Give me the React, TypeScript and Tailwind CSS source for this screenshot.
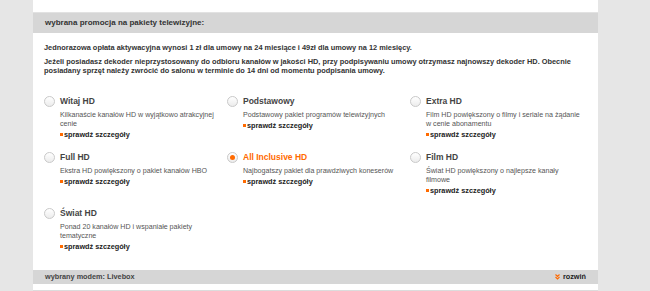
import React from "react";

interface Pkg {
  name: string;
  desc: string;
  selected?: boolean;
}

const packages: Pkg[] = [
  { name: "Witaj HD", desc: "Kilkanaście kanałów HD w wyjątkowo atrakcyjnej cenie" },
  { name: "Podstawowy", desc: "Podstawowy pakiet programów telewizyjnych" },
  { name: "Extra HD", desc: "Film HD powiększony o filmy i seriale na żądanie w cenie abonamentu" },
  { name: "Full HD", desc: "Ekstra HD powiększony o pakiet kanałów HBO" },
  { name: "All Inclusive HD", desc: "Najbogatszy pakiet dla prawdziwych koneserów", selected: true },
  { name: "Film HD", desc: "Świat HD powiększony o najlepsze kanały filmowe" },
  { name: "Świat HD", desc: "Ponad 20 kanałów HD i wspaniałe pakiety tematyczne" },
];

function Radio({ checked }: { checked?: boolean }) {
  return (
    <span className="mt-[1px] flex h-[11px] w-[11px] shrink-0 items-center justify-center rounded-full border border-[#c9c9c9] bg-gradient-to-b from-white to-[#ececec]">
      {checked && <span className="h-[5px] w-[5px] rounded-full bg-[#ff6a00]" />}
    </span>
  );
}

function PackageOption({ name, desc, selected }: Pkg) {
  return (
    <div className="flex h-[56px] gap-[5px]">
      <Radio checked={selected} />
      <div className="flex flex-col">
        <span
          className={`text-[8.5px] font-bold leading-[12px] ${
            selected ? "text-[#ff6a00]" : "text-[#444]"
          }`}
        >
          {name}
        </span>
        <p className="mt-[4px] w-[157px] text-[7.1px] leading-[9px] text-[#555]">{desc}</p>
        <a className="mt-[0.5px] flex items-center gap-[1px] text-[7.3px] font-bold leading-[9px] text-[#222]">
          <span className="h-[3px] w-[3px] bg-[#ff6a00]" />
          sprawdź szczegóły
        </a>
      </div>
    </div>
  );
}

export default function App() {
  return (
    <div className="flex h-[291px] w-[650px] overflow-hidden bg-[#e6e6e6] font-['Liberation_Sans',Arial,sans-serif]">
      <div className="ml-[33px] flex w-[565px] flex-col bg-white">
        <div className="mt-[12px] flex h-[24px] items-center border-t border-[#e2e2e2] bg-[#d6d6d6] px-[12px] text-[8px] font-bold text-[#333]">
          wybrana promocja na pakiety telewizyjne:
        </div>

        <div className="px-[11px] pt-[11px] text-[7.4px] font-bold leading-[8.5px] text-[#333]">
          <p>
            Jednorazowa opłata aktywacyjna wynosi 1 zł dla umowy na 24 miesiące i 49zł dla umowy na 12 miesięcy.
          </p>
          <p className="mt-[6px] w-[535px]">
            Jeżeli posiadasz dekoder nieprzystosowany do odbioru kanałów w jakości HD, przy podpisywaniu umowy
            otrzymasz najnowszy dekoder HD. Obecnie posiadany sprzęt należy zwrócić do salonu w terminie do 14 dni od
            momentu podpisania umowy.
          </p>
        </div>

        <div className="mt-[20px] grid grid-cols-[183px_183px_183px] px-[11px]">
          {packages.map((p) => (
            <PackageOption key={p.name} {...p} />
          ))}
        </div>

        <div className="mt-[7px] flex h-[16px] items-center justify-between bg-[#d6d6d6] px-[12px] text-[7.3px] text-[#444]">
          <span className="font-bold">wybrany modem: Livebox</span>
          <span className="flex items-center gap-[3px] font-bold text-[#222]">
            <svg width="5" height="6" viewBox="0 0 5 6" className="text-[#ff6a00]">
              <path d="M0.5 0.5 L2.5 2.5 L4.5 0.5 M0.5 3 L2.5 5 L4.5 3" fill="none" stroke="currentColor" strokeWidth="1.1" />
            </svg>
            rozwiń
          </span>
        </div>
        <div className="mt-[6px] h-px bg-[#dcdcdc]" />
      </div>
    </div>
  );
}
